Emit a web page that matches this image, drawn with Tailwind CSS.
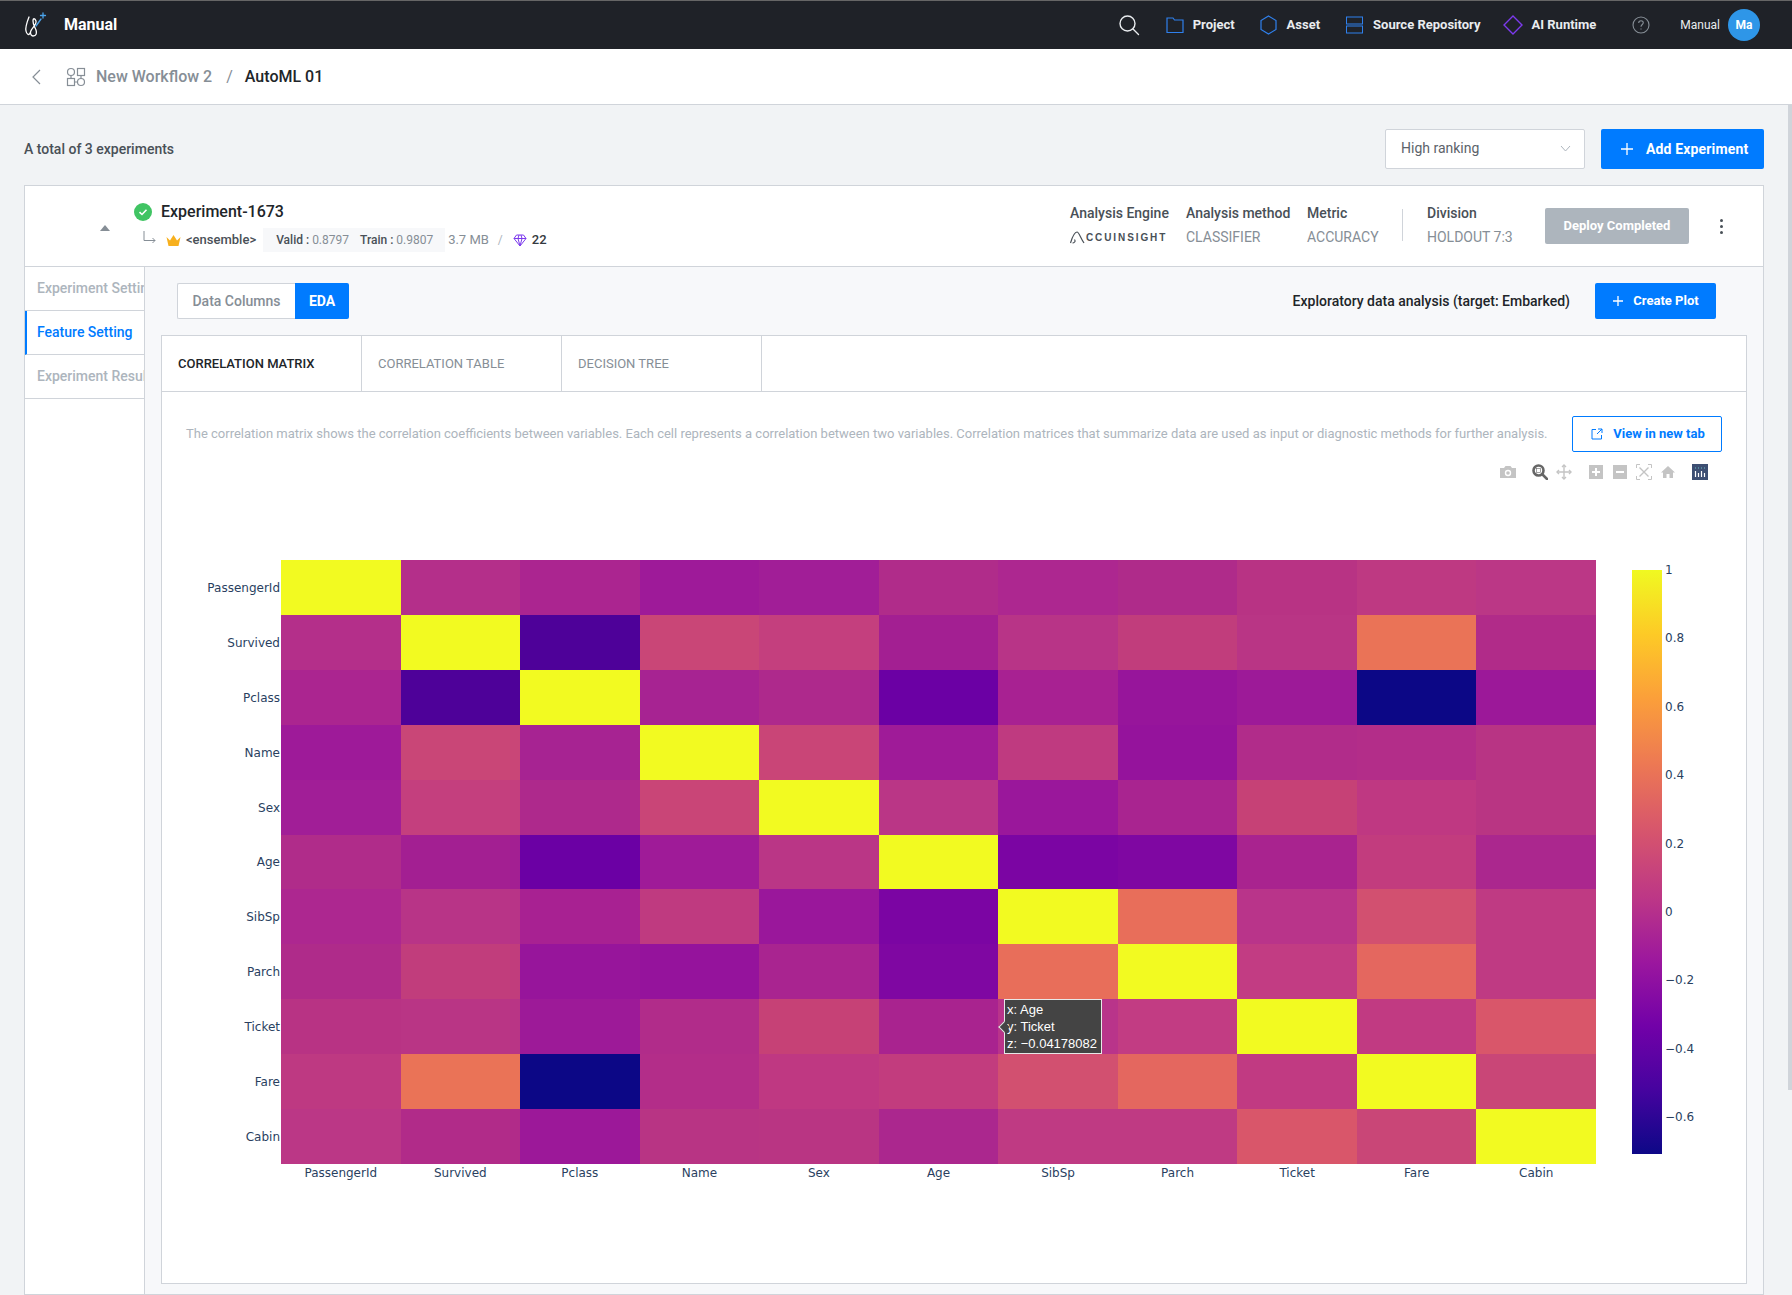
<!DOCTYPE html>
<html lang="en">
<head>
    <meta charset="UTF-8">
    <meta name="viewport" content="width=device-width, initial-scale=1.0">
    <title>AutoML 01</title>
    <script src="https://cdn.jsdelivr.net/npm/@tailwindcss/browser@4"></script>
</head>
<body class="relative h-[1295px] overflow-hidden bg-[#f1f3f5] font-['Roboto',sans-serif] text-[#212529]">
    <!-- top bar -->
    <header class="flex h-[49px] items-center border-t border-[#666] bg-[#1f2228] pl-[24px] pr-[32px] text-[#e9ecef]">
        <svg class="h-[26px] w-[24px]" viewBox="0 0 24 26" fill="none" stroke="#fff" stroke-width="1.3" stroke-linecap="round">
            <path d="M5 5 C3 10 1 15 2 19 C2.5 22 5 24 6 21"/>
            <path d="M9 24 C12.5 24 13 21 12 18 C11 15 9 13 9 9 C9 6 11 6 12 9 C13 13 7 16 6.5 20 C6.3 22.5 7.5 24 9 24 Z"/>
            <path d="M12 14 L17 7" stroke="#4ba3ea"/>
            <path d="M19 1 V6 M16.500 3.500 H21.500" stroke="#4ba3ea"/>
        </svg>
        <span class="ml-[16px] text-[16px] font-bold text-white">Manual</span>
        <svg class="ml-auto h-[22px] w-[22px]" viewBox="0 0 22 22" fill="none" stroke="#e9ecef" stroke-width="1.4" stroke-linecap="round"><circle cx="9.500" cy="9.500" r="7.500"/><path d="M15 15 L20.500 20.500"/></svg>
        <svg class="ml-[26px] h-[18px] w-[18px]" viewBox="0 0 18 18" fill="none" stroke="#2f80ed" stroke-width="1.200"><path d="M1 2 H7 L8.500 4 H17 V16.500 H1 Z"/></svg>
        <span class="ml-[9px] text-[13px] font-bold">Project</span>
        <svg class="ml-[25px] h-[20px] w-[17px]" viewBox="0 0 17 20" fill="none" stroke="#2f80ed" stroke-width="1.200"><path d="M8.500 1 L16 5.500 V14.500 L8.500 19 L1 14.500 V5.500 Z"/></svg>
        <span class="ml-[10px] text-[13px] font-bold">Asset</span>
        <svg class="ml-[26px] h-[18px] w-[17px]" viewBox="0 0 17 18" fill="none" stroke="#2f80ed" stroke-width="1"><rect x="0.500" y="1" width="16" height="7"/><rect x="0.500" y="10" width="16" height="7"/></svg>
        <span class="ml-[10px] text-[13px] font-bold">Source Repository</span>
        <svg class="ml-[22px] h-[20px] w-[20px]" viewBox="0 0 20 20" fill="none" stroke="#7c3aed" stroke-width="1.400"><path d="M10 1 L19 10 L10 19 L1 10 Z"/></svg>
        <span class="ml-[9px] text-[13px] font-bold">AI Runtime</span>
        <svg class="ml-[36px] h-[18px] w-[18px]" viewBox="0 0 18 18" fill="none" stroke="#868e96" stroke-width="1.100"><circle cx="9" cy="9" r="8"/><path d="M6.700 7 C6.700 5.600 7.700 4.700 9 4.700 C10.400 4.700 11.300 5.600 11.300 6.800 C11.300 8.500 9 8.600 9 10.700"/><path d="M9 12.400 V13.600"/></svg>
        <span class="ml-[30px] text-[12px]">Manual</span>
        <span class="ml-[8px] flex h-[32px] w-[32px] items-center justify-center rounded-full bg-[#2e96e8] text-[12px] font-bold text-white">Ma</span>
    </header>

    <!-- breadcrumb -->
    <div class="flex h-[56px] items-center border-b border-[#d0d4da] bg-white pl-[31px]">
        <svg class="h-[18px] w-[10px]" viewBox="0 0 10 18" fill="none" stroke="#868e96" stroke-width="1.200"><path d="M9 2 L2 9 L9 16"/></svg>
        <svg class="ml-[25px] h-[20px] w-[20px]" viewBox="0 0 20 20" fill="none" stroke="#868e96" stroke-width="1.200"><circle cx="5" cy="5" r="3.500"/><rect x="11.500" y="1.500" width="7" height="7"/><rect x="1.500" y="11.500" width="7" height="7"/><circle cx="15" cy="15" r="3.500"/><path d="M8.500 15 H11.500 M15 8.500 V11.500 M5 8.500 V11.500"/></svg>
        <span class="ml-[10px] text-[16px] font-medium text-[#868e96]">New Workflow 2</span>
        <span class="ml-[14px] text-[16px] text-[#868e96]">/</span>
        <span class="ml-[12px] text-[16px] font-medium text-[#212529]">AutoML 01</span>
    </div>

    <!-- page scrollbar -->
    <div class="absolute right-0 top-[105px] h-[985px] w-[4px] bg-[#d0d4da]"></div>

    <main class="pl-[24px] pr-[28px]">
        <div class="flex h-[64px] items-end">
            <div class="flex h-[40px] w-full items-center">
                <span class="text-[14px] font-medium text-[#495057]">A total of 3 experiments</span>
                <div class="ml-auto flex h-[40px] w-[200px] items-center justify-between rounded-[2px] border border-[#d0d4da] bg-white pb-[2px] pl-[15px] pr-[13px] text-[14px] text-[#5c636a]">
                    High ranking
                    <svg class="h-[7px] w-[11px]" viewBox="0 0 11 7" fill="none" stroke="#adb5bd" stroke-width="1"><path d="M1 1 L5.500 6 L10 1"/></svg>
                </div>
                <button class="ml-[16px] flex h-[40px] w-[163px] items-center rounded-[2px] bg-[#007bff] pl-[20px] text-[14px] font-bold tracking-[0.15px] text-white">
                    <svg class="h-[12px] w-[12px]" viewBox="0 0 12 12" fill="none" stroke="#fff" stroke-width="1.300"><path d="M6 0 V12 M0 6 H12"/></svg>
                    <span class="ml-[13px]">Add Experiment</span>
                </button>
            </div>
        </div>

        <section class="mt-[16px] h-[1110px] border border-[#d0d4da] bg-white">
            <!-- experiment summary -->
            <div class="flex h-[81px] items-start border-b border-[#d0d4da]">
                <div class="ml-[75px] mt-[39px] h-0 w-0 border-x-[5px] border-b-[6px] border-x-transparent border-b-[#868e96]"></div>
                <div class="ml-[24px] mt-[14px]">
                    <div class="flex items-center">
                        <svg class="h-[18px] w-[18px]" viewBox="0 0 18 18"><circle cx="9" cy="9" r="9" fill="#40c463"/><path d="M5.500 9.200 L8 11.500 L12.500 6.800" fill="none" stroke="#fff" stroke-width="1.600"/></svg>
                        <span class="ml-[9px] text-[16px] font-medium">Experiment-1673</span>
                    </div>
                    <div class="ml-[9px] mt-[4px] flex h-[24px] items-center text-[12px]">
                        <svg class="mb-[6px] h-[13px] w-[13px]" viewBox="0 0 13 13" fill="none" stroke="#868e96" stroke-width="1"><path d="M1 0 V9.500 H12 M9.500 7 L12 9.500 L9.500 12"/></svg>
                        <svg class="ml-[10px] h-[13px] w-[15px]" viewBox="0 0 15 13"><path d="M0.500 3 L4 6.500 L7.500 1 L11 6.500 L14.500 3 L12.500 12 H2.500 Z" fill="#f7b01e"/></svg>
                        <span class="ml-[5px] text-[13px] font-medium text-[#495057]">&lt;ensemble&gt;</span>
                        <div class="ml-[7px] flex h-[24px] w-[182px] items-center bg-[#f7f8fa] pl-[13px] text-[#868e96]">
                            <span class="font-medium text-[#495057]">Valid :</span><span class="ml-[3px]">0.8797</span>
                            <span class="ml-[11px] font-medium text-[#495057]">Train :</span><span class="ml-[3px]">0.9807</span>
                        </div>
                        <span class="ml-[3px] text-[13px] text-[#868e96]">3.7 MB</span>
                        <span class="ml-[9px] text-[#adb5bd]">/</span>
                        <svg class="ml-[10px] h-[13px] w-[14px]" viewBox="0 0 14 13" fill="none" stroke="#7c3aed" stroke-width="1"><path d="M3.500 1 H10.500 L13 4.500 L7 12 L1 4.500 Z M1 4.500 H13 M5 4.500 L7 12 L9 4.500 M5 4.500 L6 1 M9 4.500 L8 1"/></svg>
                        <span class="ml-[5px] text-[13px] font-medium text-[#343a40]">22</span>
                    </div>
                </div>
                <div class="ml-auto flex h-full items-start">
                    <div class="mt-[18px] w-[116px]">
                        <div class="text-[14px] font-medium leading-[18px] text-[#495057]">Analysis Engine</div>
                        <div class="mt-[7px] flex h-[16px] items-center">
                            <svg class="h-[13px] w-[15px]" viewBox="0 0 15 13" fill="none" stroke="#495057" stroke-width="1.200"><path d="M0.500 12 C2 7 4.500 1 7 1 C9 1 10.500 7 14 12 M4.500 8.500 C6 10.500 4 12 2.500 12"/></svg>
                            <span class="ml-[1px] font-['Liberation_Sans',sans-serif] text-[10px] font-bold tracking-[1.9px] text-[#495057]">CCUINSIGHT</span>
                        </div>
                    </div>
                    <div class="mt-[18px] w-[121px]">
                        <div class="text-[14px] font-medium leading-[18px] text-[#495057]">Analysis method</div>
                        <div class="mt-[5px] text-[14px] text-[#868e96]">CLASSIFIER</div>
                    </div>
                    <div class="mt-[18px] w-[95px]">
                        <div class="text-[14px] font-medium leading-[18px] text-[#495057]">Metric</div>
                        <div class="mt-[5px] text-[14px] text-[#868e96]">ACCURACY</div>
                    </div>
                    <div class="mt-[23px] h-[32px] w-px bg-[#d0d4da]"></div>
                    <div class="ml-[24px] mt-[18px] w-[118px]">
                        <div class="text-[14px] font-medium leading-[18px] text-[#495057]">Division</div>
                        <div class="mt-[5px] text-[14px] text-[#868e96]">HOLDOUT 7:3</div>
                    </div>
                    <button class="mt-[22px] flex h-[36px] w-[144px] items-center justify-center rounded-[2px] bg-[#adb5bd] text-[13px] font-bold text-white">Deploy Completed</button>
                    <div class="ml-[31px] mr-[40px] mt-[33px] flex flex-col gap-[3px]">
                        <span class="h-[3px] w-[3px] rounded-full bg-[#495057]"></span>
                        <span class="h-[3px] w-[3px] rounded-full bg-[#495057]"></span>
                        <span class="h-[3px] w-[3px] rounded-full bg-[#495057]"></span>
                    </div>
                </div>
            </div>

            <div class="flex h-[1027px]">
                <!-- side menu -->
                <nav class="w-[120px] shrink-0 border-r border-[#d0d4da] bg-white text-[14px] font-medium">
                    <div class="flex h-[44px] items-center overflow-hidden whitespace-nowrap border-b border-[#d0d4da] pl-[12px] text-[#adb5bd]">Experiment Setting</div>
                    <div class="flex h-[44px] items-center overflow-hidden whitespace-nowrap border-b border-l-2 border-[#d0d4da] border-l-[#007bff] pl-[10px] text-[#007bff]">Feature Setting</div>
                    <div class="flex h-[44px] items-center overflow-hidden whitespace-nowrap border-b border-[#d0d4da] pl-[12px] text-[#adb5bd]">Experiment Result</div>
                </nav>

                <div class="min-w-0 flex-1 bg-[#f7f8fa] pl-[16px] pr-[16px] pt-[16px]">
                    <div class="flex h-[36px] items-center pl-[16px] pr-[31px]">
                        <div class="flex h-[36px]">
                            <span class="flex w-[118px] items-center justify-center rounded-l-[2px] border border-r-0 border-[#d0d4da] bg-white text-[14px] font-medium text-[#868e96]">Data Columns</span>
                            <span class="flex w-[54px] items-center justify-center rounded-r-[2px] bg-[#007bff] text-[14px] font-bold text-white">EDA</span>
                        </div>
                        <span class="ml-auto text-[14px] font-medium">Exploratory data analysis (target: Embarked)</span>
                        <button class="ml-[25px] flex h-[36px] w-[121px] items-center justify-center rounded-[2px] bg-[#007bff] pl-[1px] text-[13px] font-bold text-white">
                            <svg class="h-[10px] w-[10px]" viewBox="0 0 10 10" fill="none" stroke="#fff" stroke-width="1.300"><path d="M5 0 V10 M0 5 H10"/></svg>
                            <span class="ml-[10px]">Create Plot</span>
                        </button>
                    </div>

                    <div class="mt-[16px] h-[949px] border border-[#d0d4da] bg-white">
                        <div class="flex h-[56px] border-b border-[#d0d4da] text-[13px]">
                            <span class="flex w-[200px] items-center border-r border-[#d0d4da] pl-[16px] font-medium text-[#212529]">CORRELATION MATRIX</span>
                            <span class="flex w-[200px] items-center border-r border-[#d0d4da] pl-[16px] text-[#868e96]">CORRELATION TABLE</span>
                            <span class="flex w-[200px] items-center border-r border-[#d0d4da] pl-[16px] text-[#868e96]">DECISION TREE</span>
                        </div>

                        <div class="mt-[24px] flex h-[36px] items-center pl-[24px] pr-[24px]">
                            <p class="text-[13px] text-[#adb5bd]">The correlation matrix shows the correlation coefficients between variables. Each cell represents a correlation between two variables. Correlation matrices that summarize data are used as input or diagnostic methods for further analysis.</p>
                            <button class="ml-auto flex h-[36px] w-[150px] items-center justify-center rounded-[2px] border border-[#007bff] bg-white pl-[2px] text-[13px] font-bold text-[#007bff]">
                                <svg class="h-[12px] w-[12px]" viewBox="0 0 12 12" fill="none" stroke="#007bff" stroke-width="1"><path d="M5 1.500 H1 V11 H10.500 V7 M7 1 H11 V5 M11 1 L6 6"/></svg>
                                <span class="ml-[10px]">View in new tab</span>
                            </button>
                        </div>

                        <!-- plotly modebar -->
                        <div class="mt-[12px] flex h-[16px] justify-end pr-[38px]">
                            <svg class="h-[16px] w-[16px]" viewBox="0 0 16 16"><path d="M0 4 H4 L5.500 2 H10.500 L12 4 H16 V14 H0 Z" fill="#c4c4c4"/><circle cx="8" cy="9" r="3.200" fill="#fff"/><circle cx="8" cy="9" r="1.800" fill="#c4c4c4"/></svg>
                            <svg class="ml-[16px] h-[16px] w-[16px]" viewBox="0 0 16 16"><path d="M10 10 L15 15" stroke="#666" stroke-width="2.500" stroke-linecap="round"/><circle cx="6.500" cy="6.500" r="5" fill="none" stroke="#666" stroke-width="2.600"/><rect x="4.500" y="4.500" width="4" height="4" fill="#fff" stroke="#666" stroke-width="0.600"/></svg>
                            <svg class="ml-[8px] h-[16px] w-[16px]" viewBox="0 0 16 16" fill="none" stroke="#c4c4c4" stroke-width="1.400"><path d="M8 1 V15 M1 8 H15"/><path d="M6 3 L8 1 L10 3 M6 13 L8 15 L10 13 M3 6 L1 8 L3 10 M13 6 L15 8 L13 10"/></svg>
                            <svg class="ml-[17px] h-[16px] w-[14px]" viewBox="0 0 14 16"><rect y="1" width="14" height="14" fill="#c4c4c4"/><path d="M7 4 V12 M3 8 H11" stroke="#fff" stroke-width="2"/></svg>
                            <svg class="ml-[10px] h-[16px] w-[14px]" viewBox="0 0 14 16"><rect y="1" width="14" height="14" fill="#c4c4c4"/><path d="M3 8 H11" stroke="#fff" stroke-width="2"/></svg>
                            <svg class="ml-[9px] h-[16px] w-[16px]" viewBox="0 0 16 16" fill="none" stroke="#c4c4c4"><path d="M0.500 4 V0.500 H4 M12 0.500 H15.500 V4 M15.500 12 V15.500 H12 M4 15.500 H0.500 V12"/><path d="M3.500 3.500 L12.500 12.500 M12.500 3.500 L3.500 12.500" stroke-width="1.400"/></svg>
                            <svg class="ml-[9px] h-[16px] w-[14px]" viewBox="0 0 14 16"><path d="M7 2 L14 8.500 H12 V14 H8.500 V10 H5.500 V14 H2 V8.500 H0 Z" fill="#c4c4c4"/></svg>
                            <svg class="ml-[17px] h-[16px] w-[16px]" viewBox="0 0 16 16"><rect width="16" height="16" fill="#3d4f73"/><path d="M3.500 7 V13 M6.500 9 V13 M9.500 7 V13 M12.500 9 V13" stroke="#fff" stroke-width="1.200"/><path d="M3 4 H13" stroke="#6fc3c9" stroke-width="1.200" stroke-dasharray="1 2"/></svg>
                        </div>

                        <!-- heatmap -->
                        <div class="mt-[80px] flex font-['DejaVu_Sans',sans-serif] text-[12px] text-[#2a3f5f]">
                            <div id="yLabels" class="grid h-[604px] w-[119px] grid-rows-11 text-right"></div>
                            <div class="relative">
                                <div id="heat" class="grid h-[604px] w-[1315px] grid-cols-11 grid-rows-11"></div>
                                <div id="xLabels" class="grid w-[1315px] grid-cols-11 text-center"></div>
                                <div class="absolute left-[723px] top-[439px] h-[55px] w-[98px] border border-[#e8e8e8] bg-[#444] pl-[2px] pt-[1px] font-['Liberation_Sans',sans-serif] text-[13px] leading-[17px] text-white">
                                    <span class="absolute -left-[5px] top-[23px] h-[8px] w-[8px] rotate-45 border-b border-l border-[#e8e8e8] bg-[#444]"></span>
                                    <div>x: Age</div>
                                    <div>y: Ticket</div>
                                    <div>z: −0.04178082</div>
                                </div>
                            </div>
                            <div class="ml-[36px] mt-[10px] h-[584px] w-[30px] bg-[linear-gradient(to_bottom,#f0f921,#fdca26_11%,#fb9f3a_22%,#ed7953_33%,#d8576b_44%,#bd3786_56%,#9c179e_67%,#7201a8_78%,#46039f_89%,#0d0887)]"></div>
                            <div class="ml-[3px] mt-[2px] flex h-[563px] flex-col justify-between leading-[16px]">
                                <span>1</span><span>0.8</span><span>0.6</span><span>0.4</span><span>0.2</span><span>0</span><span>−0.2</span><span>−0.4</span><span>−0.6</span>
                            </div>
                        </div>
                    </div>
                </div>
            </div>
        </section>
    </main>

    <script>
        const names = ['PassengerId', 'Survived', 'Pclass', 'Name', 'Sex', 'Age', 'SibSp', 'Parch', 'Ticket', 'Fare', 'Cabin'];
        const Y = '#f2fa21';
        const colors = [
            [Y, '#b42f8a', '#ab2590', '#9e1a99', '#a11e97', '#b02c8a', '#ad2790', '#af2b8a', '#b83384', '#be3982', '#bb3786'],
            ['#b42f8a', Y, '#4e0199', '#c94677', '#c43f7e', '#a31f92', '#b83487', '#c13d7c', '#b93585', '#ea7357', '#b12b89'],
            ['#ab2590', '#4e0199', Y, '#a72392', '#ae298c', '#6b00a4', '#a82192', '#97159b', '#9d1a98', '#0c0786', '#9c1899'],
            ['#9e1a99', '#c94677', '#a72392', Y, '#c94577', '#9f1b98', '#bf3a80', '#95139c', '#b12c8a', '#b32d89', '#b83484'],
            ['#a11e97', '#c43f7e', '#ae298c', '#c94577', Y, '#ba3686', '#9a179b', '#a92490', '#c64176', '#bf3882', '#b93583'],
            ['#b02c8a', '#a31f92', '#6b00a4', '#9f1b98', '#ba3686', Y, '#7b05a3', '#7f07a2', '#a9238f', '#c23c7e', '#ab278e'],
            ['#ad2790', '#b83487', '#a82192', '#bf3a80', '#9a179b', '#7b05a3', Y, '#e86e5a', '#b9348a', '#d25070', '#bf3a83'],
            ['#af2b8a', '#c13d7c', '#97159b', '#95139c', '#a92490', '#7f07a2', '#e86e5a', Y, '#c23c83', '#e4675f', '#bf3a83'],
            ['#b83384', '#b93585', '#9d1a98', '#b12c8a', '#c64176', '#a9238f', '#b9348a', '#c23c83', Y, '#c13a82', '#d9566a'],
            ['#be3982', '#ea7357', '#0c0786', '#b32d89', '#bf3882', '#c23c7e', '#d25070', '#e4675f', '#c13a82', Y, '#c94677'],
            ['#bb3786', '#b12b89', '#9c1899', '#b83484', '#b93583', '#ab278e', '#bf3a83', '#bf3a83', '#d9566a', '#c94677', Y]
        ];

        const heat = document.getElementById('heat');
        const yLabels = document.getElementById('yLabels');
        const xLabels = document.getElementById('xLabels');

        colors.forEach((row, r) => {
            const yl = document.createElement('div');
            yl.className = 'flex items-center justify-end pr-px pt-[1px]';
            yl.textContent = names[r];
            yLabels.appendChild(yl);

            const xl = document.createElement('div');
            xl.textContent = names[r];
            xLabels.appendChild(xl);

            row.forEach((c) => {
                const cell = document.createElement('div');
                cell.style.backgroundColor = c;
                heat.appendChild(cell);
            });
        });
    </script>
</body>
</html>
